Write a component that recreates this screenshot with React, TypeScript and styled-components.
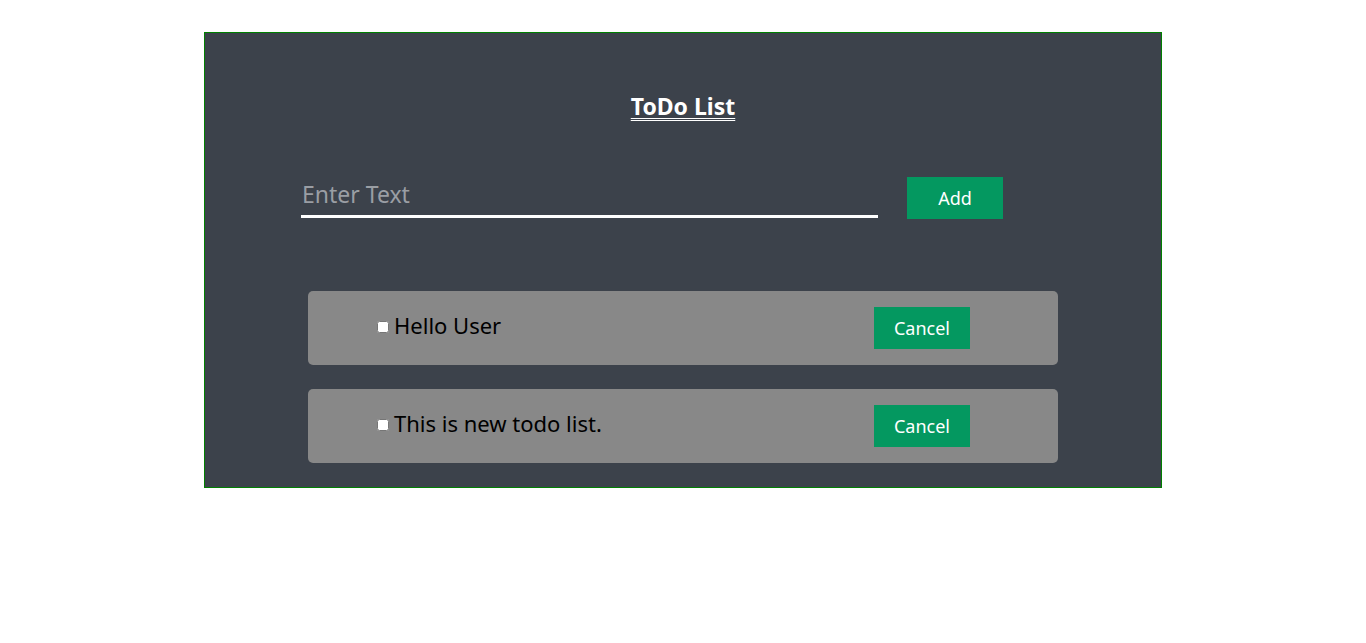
import React, { useState } from "react";
import styled, { createGlobalStyle } from "styled-components";

const Global = createGlobalStyle`
  html, body { margin: 0; padding: 0; background: #fff; }
  body { font-family: "Noto Sans", "Open Sans", sans-serif; }
  * { box-sizing: border-box; }
`;

const Page = styled.div`
  padding-top: 32px;
`;

const Panel = styled.div`
  width: 958px;
  height: 456px;
  margin: 0 auto;
  background: #3c424b;
  border: 1px solid #008000;
  display: flex;
  flex-direction: column;
  align-items: center;
`;

const Title = styled.h1`
  margin: 55px 0 0;
  height: 36px;
  font-size: 23px;
  font-weight: 700;
  color: #fff;
  text-decoration: underline double;
  text-underline-offset: 3px;
  text-decoration-thickness: 1px;
  line-height: 36px;
`;

const Form = styled.div`
  display: flex;
  align-items: flex-end;
  gap: 29px;
  margin-top: 53px;
  align-self: flex-start;
  margin-left: 96px;
`;

const Input = styled.input`
  width: 577px;
  height: 41px;
  background: transparent;
  border: none;
  border-bottom: 3px solid #fff;
  outline: none;
  color: #fff;
  font-family: inherit;
  font-size: 23px;
  padding: 0 1px 4px;
  margin-bottom: 1px;
  &::placeholder { color: #9a9ea4; }
`;

const GreenButton = styled.button`
  width: 96px;
  height: 42px;
  background: #049860;
  border: none;
  color: #fff;
  font-family: inherit;
  font-size: 18px;
  cursor: pointer;
  padding: 0;
`;

const List = styled.div`
  margin-top: 72px;
  display: flex;
  flex-direction: column;
  gap: 24px;
`;

const Item = styled.div`
  width: 750px;
  height: 74px;
  background: #888888;
  border-radius: 5px;
  display: flex;
  align-items: center;
  padding: 0 88px 0 69px;
`;

const Label = styled.label`
  flex: 1;
  display: flex;
  align-items: center;
  gap: 5px;
  font-size: 22px;
  color: #000;
  margin-top: -6px;
`;

const Check = styled.input`
  width: 12px;
  height: 12px;
  margin: 4px 0 0;
`;

export default function App() {
  const [items] = useState(["Hello User", "This is new todo list."]);
  return (
    <Page>
      <Global />
      <Panel>
        <Title>ToDo List</Title>
        <Form>
          <Input placeholder="Enter Text" />
          <GreenButton>Add</GreenButton>
        </Form>
        <List>
          {items.map((t) => (
            <Item key={t}>
              <Label>
                <Check type="checkbox" />
                {t}
              </Label>
              <GreenButton>Cancel</GreenButton>
            </Item>
          ))}
        </List>
      </Panel>
    </Page>
  );
}
